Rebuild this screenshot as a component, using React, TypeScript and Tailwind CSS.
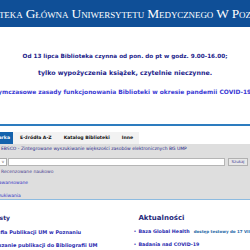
import React from "react";

const verdana = "font-['DejaVu_Sans',Verdana,sans-serif]";

export default function App() {
  return (
    <div className={`w-[250px] h-[250px] overflow-hidden bg-white ${verdana}`}>
      {/* header */}
      <div className="h-[27px] bg-[#0f4f97] flex justify-center items-center overflow-hidden">
        <div className="whitespace-nowrap text-white text-[13.4px] leading-none tracking-[-0.1px] [font-variant:small-caps] font-['Liberation_Serif',serif] pt-[1px] pr-[4px]">
          Biblioteka Główna Uniwersytetu Medycznego W Poznaniu
        </div>
      </div>

      {/* announcements */}
      <div className="flex flex-col items-center pt-[26px]">
        <div className="whitespace-nowrap text-[5.7px] leading-[6px] font-bold text-[#1c1c8a]">
          Od 13 lipca Biblioteka czynna od pon. do pt w godz. 9.00-16.00;
        </div>
        <div className="whitespace-nowrap text-[6.3px] leading-[7px] font-bold text-[#1c1c8a] mt-[10px]">
          tylko wypożyczenia książek, czytelnie nieczynne.
        </div>
        <div className="whitespace-nowrap text-[5.95px] leading-[7px] font-bold text-[#3a3ad4] mt-[12px] pr-[4px]">
          Tymczasowe zasady funkcjonowania Biblioteki w okresie pandemii COVID-19
        </div>
      </div>

      {/* divider line */}
      <div className="mt-[29px] h-[2px] bg-[#2d7cbf]" />

      {/* tabs */}
      <div className="mt-[6px] flex h-[12px]">
        <div className="flex bg-[#f2f2f2] text-[4.6px] font-bold leading-[12px] text-[#111]">
          <div className="bg-[#1463ad] text-white pr-[3px] w-[13px] overflow-hidden flex justify-end">
            <span className="whitespace-nowrap">Wyszukiwarka</span>
          </div>
          <div className="pl-[7px] pr-[6px] whitespace-nowrap">E-źródła A-Z</div>
          <div className="px-[6px] whitespace-nowrap">Katalog Biblioteki</div>
          <div className="px-[6px] whitespace-nowrap">Inne</div>
        </div>
      </div>

      {/* search panel */}
      <div className="bg-[#dedede] h-[56px] border-b border-[#8dbbe0] flex flex-col">
        <div className="whitespace-nowrap text-[4.5px] leading-[6px] text-[#2a2a8a] pl-[1px] mt-[2px]">
          EBSCO - Zintegrowane wyszukiwanie większości zasobów elektronicznych BG UMP
        </div>
        <div className="flex items-center mt-[6px] h-[8px]">
          <div className="w-[7px] h-[8px] bg-white border border-[#aaa] border-l-0 flex items-center justify-center text-[4px] text-[#555]">
            v
          </div>
          <div className="ml-[1px] w-[217px] h-[8px] bg-white border border-[#b5b5b5]" />
          <div className="ml-[3px] w-[20px] h-[8px] bg-[#e8e8e8] border border-[#b0b0b0] text-[4px] leading-[6px] text-[#4a4a9a] flex items-center justify-center">
            Szukaj
          </div>
        </div>
        <div className="whitespace-nowrap text-[4.5px] leading-[6px] text-[#4b3f8f] mt-[3px] ml-[1px]">
          Recenzowane naukowo
        </div>
        <div className="whitespace-nowrap text-[4.5px] leading-[6px] text-[#3535c5] mt-[5px] -ml-[7px]">
          Zaawansowane
        </div>
        <div className="whitespace-nowrap text-[4.5px] leading-[6px] text-[#3535c5] mt-[7px] -ml-[29px]">
          Historia wyszukiwania
        </div>
      </div>

      {/* bottom columns */}
      <div className="flex pt-[14px]">
        <div className="w-[145px] flex flex-col">
          <div className="whitespace-nowrap text-[6px] leading-[8px] font-bold text-[#1f2a7a] -ml-[44px]">
            Polecane teksty
          </div>
          <div className="whitespace-nowrap text-[5px] leading-[6px] font-bold text-[#2b2bb0] mt-[7px] -ml-[25px]">
            Bibliografia Publikacji UM w Poznaniu
          </div>
          <div className="whitespace-nowrap text-[5px] leading-[6px] font-bold text-[#2b2bb0] mt-[7px] -ml-[14px]">
            Zgłaszanie publikacji do Bibliografii UM
          </div>
        </div>
        <div className="flex flex-col">
          <div className="whitespace-nowrap text-[7px] leading-[8px] font-bold text-[#1f2a7a] ml-[5px]">
            Aktualności
          </div>
          <div className="flex items-center whitespace-nowrap mt-[7px] h-[6px]">
            <span className="text-[5px] text-[#2b2bb0] w-[5px]">•</span>
            <span className="text-[4.8px] font-bold text-[#2b2bb0]">Baza Global Health</span>
            <span className="text-[4px] font-bold text-[#2a6aa8] ml-[4px]">dostęp testowy do 17 VII</span>
          </div>
          <div className="flex items-center whitespace-nowrap mt-[7px] h-[6px]">
            <span className="text-[5px] text-[#2b2bb0] w-[5px]">•</span>
            <span className="text-[4.8px] font-bold text-[#2b2bb0]">Badania nad COVID-19</span>
          </div>
        </div>
      </div>
    </div>
  );
}
